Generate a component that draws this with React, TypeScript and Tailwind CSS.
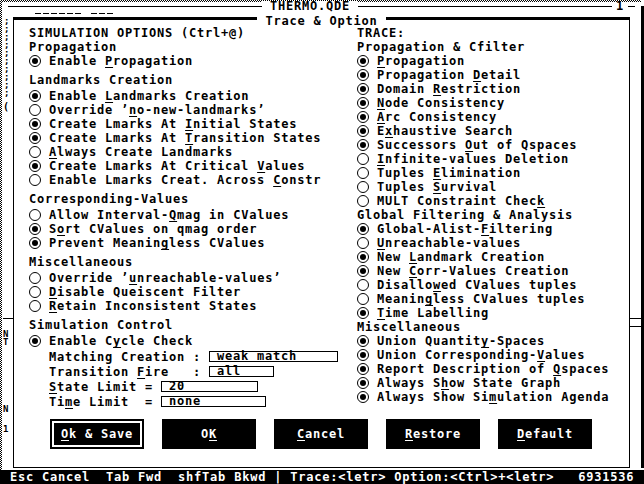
import React from "react";

const FONT = "font-['DejaVu_Sans_Mono',monospace] font-bold text-[12px] tracking-[0.78px]";

type Opt = { t: string; k?: number; on?: boolean };

function Hot({ t, k }: { t: string; k?: number }) {
  if (k == null) return <>{t}</>;
  return (
    <>
      {t.slice(0, k)}
      <span className="underline decoration-1 underline-offset-[2px]">{t[k]}</span>
      {t.slice(k + 1)}
    </>
  );
}

function Radio({ t, k, on }: Opt) {
  return (
    <div className="flex items-center h-[14px] whitespace-pre">
      <span className="w-[12px] h-[12px] rounded-full border border-black flex items-center justify-center mr-[8px] shrink-0">
        {on && <span className="w-[6px] h-[6px] rounded-full bg-black" />}
      </span>
      <span>
        <Hot t={t} k={k} />
      </span>
    </div>
  );
}

function Head({ children, className = "" }: { children: React.ReactNode; className?: string }) {
  return <div className={`h-[14px] leading-[14px] whitespace-pre ${className}`}>{children}</div>;
}

function Field({ label, k, w, box, value }: { label: string; k?: number; w: string; box: string; value: string }) {
  return (
    <div className="flex items-center h-[15px] pl-[20px] whitespace-pre">
      <span className={w}>
        <Hot t={label} k={k} />
      </span>
      <span className={`${box} h-[11px] border border-black leading-[9px] pl-[7px] flex items-center`}>{value}</span>
    </div>
  );
}

const landmarks: Opt[] = [
  { t: "Enable Landmarks Creation", k: 7, on: true },
  { t: "Override \u2019no-new-landmarks\u2019", k: 10 },
  { t: "Create Lmarks At Initial States", k: 17, on: true },
  { t: "Create Lmarks At Transition States", k: 17, on: true },
  { t: "Always Create Landmarks", k: 0 },
  { t: "Create Lmarks At Critical Values", k: 26, on: true },
  { t: "Enable Lmarks Creat. Across Constr", k: 28 },
];

const corr: Opt[] = [
  { t: "Allow Interval-Qmag in CValues", k: 15 },
  { t: "Sort CValues on qmag order", k: 1, on: true },
  { t: "Prevent Meaningless CValues", k: 14, on: true },
];

const misc: Opt[] = [
  { t: "Override \u2019unreachable-values\u2019", k: 10 },
  { t: "Disable Queiscent Filter", k: 0 },
  { t: "Retain Inconsistent States", k: 0 },
];

const propTrace: Opt[] = [
  { t: "Propagation", k: 0, on: true },
  { t: "Propagation Detail", k: 12, on: true },
  { t: "Domain Restriction", k: 7, on: true },
  { t: "Node Consistency", k: 0, on: true },
  { t: "Arc Consistency", k: 0, on: true },
  { t: "Exhaustive Search", k: 1, on: true },
  { t: "Successors Out of Qspaces", k: 11, on: true },
  { t: "Infinite-values Deletion", k: 0 },
  { t: "Tuples Elimination", k: 7 },
  { t: "Tuples Survival", k: 7 },
  { t: "MULT Constraint Check", k: 20 },
];

const globalTrace: Opt[] = [
  { t: "Global-Alist-Filtering", k: 13, on: true },
  { t: "Unreachable-values", k: 0 },
  { t: "New Landmark Creation", k: 4, on: true },
  { t: "New Corr-Values Creation", k: 4, on: true },
  { t: "Disallowed CValues tuples", k: 7 },
  { t: "Meaningless CValues tuples", k: 6 },
  { t: "Time Labelling", k: 0, on: true },
];

const miscTrace: Opt[] = [
  { t: "Union Quantity-Spaces", k: 13, on: true },
  { t: "Union Corresponding-Values", k: 20, on: true },
  { t: "Report Description of Qspaces", k: 22, on: true },
  { t: "Always Show State Graph", k: 8, on: true },
  { t: "Always Show Simulation Agenda", k: 14, on: true },
];

const buttons: { t: string; k: number; focus?: boolean }[] = [
  { t: "Ok & Save", k: 0, focus: true },
  { t: "OK", k: 1 },
  { t: "Cancel", k: 0 },
  { t: "Restore", k: 0 },
  { t: "Default", k: 0 },
];

function Group({ title, items, first }: { title: string; items: Opt[]; first?: boolean }) {
  return (
    <div className={first ? "" : "mt-[5px]"}>
      <Head className={first ? "" : "mb-[2px]"}>{title}</Head>
      {items.map((o) => (
        <Radio key={o.t} {...o} />
      ))}
    </div>
  );
}

export default function App() {
  return (
    <div className={`w-[644px] h-[484px] bg-white text-black flex flex-col overflow-hidden ${FONT}`}>
      <div className="relative flex-1">
        {/* background window */}
        <div className="absolute left-0 top-0 w-[641px] h-[2px] bg-[conic-gradient(#000_25%,transparent_0_50%,#000_0_75%,transparent_0)] bg-[length:2px_2px]" />
        <div className="absolute left-0 top-0 w-[2px] h-[470px] bg-[conic-gradient(#000_25%,transparent_0_50%,#000_0_75%,transparent_0)] bg-[length:2px_2px]" />
        <div className="absolute left-[8px] top-[1px] w-[627px] h-[10px] flex items-center">
          <div className="flex-1 h-px bg-black" />
          <span className="px-[8px] bg-white leading-[10px]">THERMO.QDE</span>
          <div className="flex-1 h-px bg-black" />
          <span className="px-[4px] leading-[10px]">1</span>
          <div className="w-[7px] h-px bg-black" />
        </div>
        <div className="absolute left-[641px] top-[6px] w-[3px] h-[462px] bg-black" />
        <div className="absolute left-[35px] top-[13px] flex gap-[2px]">
          {[1, 1, 1, 1, 1, 1, 0, 1, 1, 1].map((v, i) => (
            <span key={i} className={`w-[6px] h-[1px] ${v ? "bg-black" : ""}`} />
          ))}
        </div>
        <div className="absolute left-[4px] top-[17px] leading-[8px] whitespace-pre text-[9px]">
          {";\n;\n;\n;\n;\n;\n;\n;\n;\n;"}
        </div>
        <div className="absolute left-[3px] top-[100px] leading-[14px] text-[10px]">(</div>
        <div className="absolute left-[3px] top-[318px] w-[10px] h-px bg-black" />
        <div className="absolute left-[3px] top-[330px] leading-[8px] whitespace-pre text-[9px] tracking-normal">{"N\nT"}</div>
        <div className="absolute left-[3px] top-[399px] leading-[20px] whitespace-pre text-[9px] tracking-normal">{"N\n1"}</div>
        <div className="absolute left-[630px] top-[318px] w-[11px] h-[9px] border-y border-black" />

        {/* dialog */}
        <div className="absolute left-[13px] top-[17px] w-[617px] h-[451px] border-t-[3px] border-x border-b border-black bg-white">
          <div className="absolute left-0 right-0 -top-[4px] flex justify-center">
            <span className="bg-white px-[8px] leading-[10px] whitespace-pre">Trace &amp; Option</span>
          </div>
          <div className="pt-[6px] pl-[15px] flex">
            <div className="w-[328px]">
              <Head>SIMULATION OPTIONS (Ctrl+@)</Head>
              <Group first title="Propagation" items={[{ t: "Enable Propagation", k: 7, on: true }]} />
              <Group title="Landmarks Creation" items={landmarks} />
              <Group title="Corresponding-Values" items={corr} />
              <Group title="Miscellaneous" items={misc} />
              <Group title="Simulation Control" items={[{ t: "Enable Cycle Check", k: 8, on: true }]} />
              <div className="mt-[1px]">
                <Field label="Matching Creation :" w="w-[160px]" box="w-[129px]" value="weak match" />
                <Field label="Transition Fire   :" k={11} w="w-[160px]" box="w-[65px]" value="all" />
                <Field label="State Limit =" k={0} w="w-[112px]" box="w-[97px]" value="20" />
                <Field label="Time Limit  =" k={2} w="w-[112px]" box="w-[105px]" value="none" />
              </div>
            </div>
            <div className="flex-1">
              <Head>TRACE:</Head>
              <Group first title="Propagation & Cfilter" items={propTrace} />
              <Group first title="Global Filtering & Analysis" items={globalTrace} />
              <Group first title="Miscellaneous" items={miscTrace} />
            </div>
          </div>
          <div className="mt-[10px] ml-[36px] flex gap-[18px]">
            {buttons.map((b) => (
              <div key={b.t} className="w-[94px] h-[30px] bg-black text-white p-[2px] flex">
                <div className={`flex-1 flex items-center justify-center whitespace-pre ${b.focus ? "border-2 border-white" : ""}`}>
                  <Hot t={b.t} k={b.k} />
                </div>
              </div>
            ))}
          </div>
        </div>
      </div>
      <div className="h-[14px] bg-black text-white pl-[10px] leading-[14px] whitespace-pre">
        {"Esc Cancel  Tab Fwd  shfTab Bkwd | Trace:<letr> Option:<Ctrl>+<letr>   6931536"}
      </div>
    </div>
  );
}
